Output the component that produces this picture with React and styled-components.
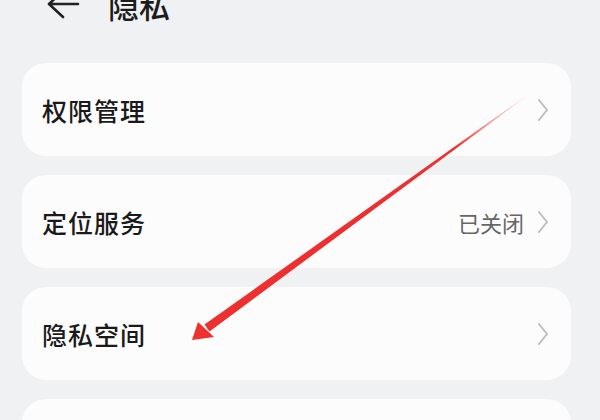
import React from "react";
import styled, { createGlobalStyle } from "styled-components";

const GlobalStyle = createGlobalStyle`
  html, body {
    margin: 0;
    padding: 0;
    background: #f0f1f3;
    font-family: "Noto Sans CJK SC", "Noto Sans", sans-serif;
  }
`;

const Page = styled.div`
  position: relative;
  width: 600px;
  height: 420px;
  overflow: hidden;
  background: #f0f1f3;
`;

const Header = styled.div`
  display: flex;
  align-items: center;
  height: 44px;
  margin-top: -18px;
  padding-left: 46px;
  gap: 28px;
`;

const Title = styled.h1`
  margin: 0;
  font-size: 31px;
  font-weight: 500;
  color: #1c1c1c;
  letter-spacing: 0;
`;

const List = styled.div`
  display: flex;
  flex-direction: column;
  gap: 19px;
  padding: 37px 29px 0 22px;
`;

const Card = styled.div`
  display: flex;
  align-items: center;
  height: 93px;
  flex-shrink: 0;
  padding: 0 22px 0 20px;
  background: #fcfcfc;
  border-radius: 24px;
`;

const Label = styled.span`
  flex: 1;
  font-size: 25px;
  font-weight: 500;
  color: #1a1a1a;
  letter-spacing: 1px;
`;

const Value = styled.span`
  font-size: 22px;
  color: #666;
  margin-right: 13px;
`;

const Annotation = styled.svg`
  position: absolute;
  left: 0;
  top: 0;
  pointer-events: none;
`;

const BackIcon = () => (
  <svg width="34" height="30" viewBox="0 0 34 30">
    <path
      d="M32 15 H4 M17 2 L3 15 L17 28"
      fill="none"
      stroke="#222"
      strokeWidth="2.6"
      strokeLinecap="round"
      strokeLinejoin="round"
    />
  </svg>
);

const Chevron = () => (
  <svg width="12" height="24" viewBox="0 0 12 24">
    <path
      d="M2 2 L10 12 L2 22"
      fill="none"
      stroke="#bdbdbd"
      strokeWidth="2"
      strokeLinecap="round"
      strokeLinejoin="round"
    />
  </svg>
);

const items = [
  { label: "权限管理" },
  { label: "定位服务", value: "已关闭" },
  { label: "隐私空间" },
  { label: "" },
];

export default function App() {
  return (
    <Page>
      <GlobalStyle />
      <Header>
        <BackIcon />
        <Title>隐私</Title>
      </Header>
      <List>
        {items.map((item, i) => (
          <Card key={i}>
            <Label>{item.label}</Label>
            {item.value && <Value>{item.value}</Value>}
            {item.label && <Chevron />}
          </Card>
        ))}
      </List>
      <Annotation width="600" height="420" viewBox="0 0 600 420">
        <defs>
          <linearGradient id="fade" gradientUnits="userSpaceOnUse" x1="525" y1="97" x2="455" y2="148">
            <stop offset="0" stopColor="#f23a3a" stopOpacity="0.05" />
            <stop offset="1" stopColor="#ee2f2f" stopOpacity="1" />
          </linearGradient>
        </defs>
        <polygon
          points="525.2,97.2 209.5,331.5 204.5,324.5 524.8,96.8"
          fill="url(#fade)"
        />
        <polygon points="192,340 198,322 214,337" fill="#f0302f" />
      </Annotation>
    </Page>
  );
}
